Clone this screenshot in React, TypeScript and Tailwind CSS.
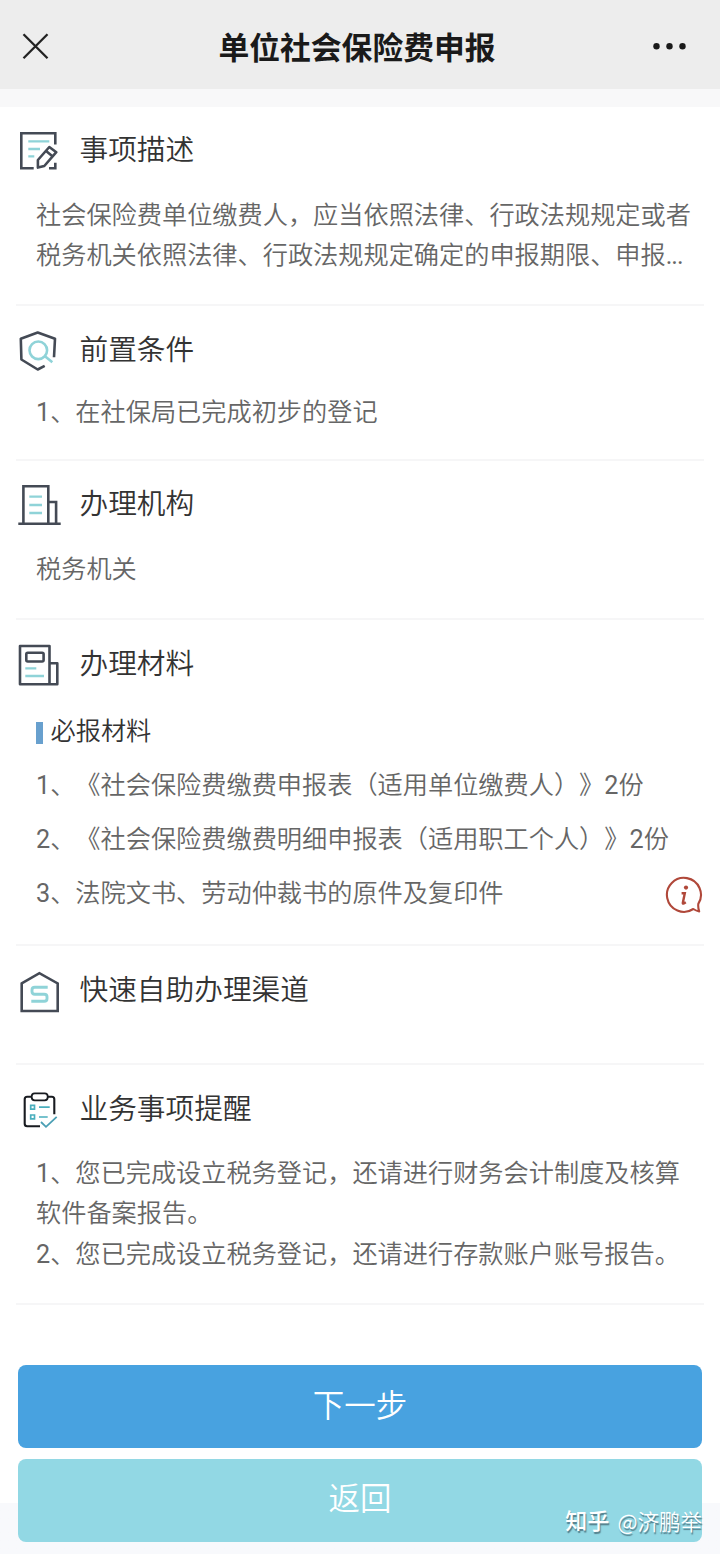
import type { ReactNode } from "react";

const INK = "#444a55";
const TEAL = "#8fd3d8";

function Icon({ children }: { children: ReactNode }) {
  return (
    <svg width="46" height="44" viewBox="0 0 46 44" fill="none" stroke={INK} strokeWidth="2.6" className="shrink-0">
      {children}
    </svg>
  );
}

const DescribeIcon = () => (
  <Icon>
    <path d="M39.3 15.5V4.2H5.3v35h12.4M33 39.2h6.3v-5.5" />
    <path d="M12.3 12.3h21M12.3 20H24M12.3 27.3h6" stroke={TEAL} strokeWidth="2.3" />
    <path d="M21.9 38.6V31L33.3 18l7 5.2L28.3 37Zm7.9-16.8 6.6 5.4" strokeLinejoin="round" />
  </Icon>
);

const ShieldIcon = () => (
  <Icon>
    <path d="M38 28.3 39 9.7 21.7 3.5 4.8 9.7l.6 20.8 16.3 10 7-3.6" strokeLinejoin="round" />
    <circle cx="22.3" cy="21.3" r="8.8" stroke={TEAL} />
    <path d="m29 27.2 7.3 6" stroke={TEAL} />
  </Icon>
);

const BuildingIcon = () => (
  <Icon>
    <path d="M2.3 40.7h42.4M7.4 40V3.2h24.9V40M32.3 19h7.8v21" />
    <path d="M13.3 13.7H26M13.3 22H26M13.3 30H26" stroke={TEAL} strokeWidth="2.3" />
  </Icon>
);

const MaterialIcon = () => (
  <Icon>
    <path d="M4 3h29.5v38.2H4ZM33.5 20.3h7.8v20.9h-7.8" strokeLinejoin="round" />
    <rect x="10.3" y="9.7" width="17.3" height="8.8" rx="1.5" />
    <path d="M9.3 25.3h11M9.3 33H28" stroke={TEAL} strokeWidth="2.3" />
  </Icon>
);

const ChannelIcon = () => (
  <Icon>
    <path d="M5.7 13.4 23.4 3.2l18.3 10.2V41h-36Z" />
    <path
      d="M31.7 17.3H18.8q-2.8 0-2.8 2.6v1.6q0 2.7 2.8 2.7h9.4q2.8 0 2.8 2.6v2q0 2.5-2.8 2.5H15.3"
      stroke={TEAL}
      strokeWidth="2.9"
    />
  </Icon>
);

const ReminderIcon = () => (
  <Icon>
    <path
      d="M15.5 8.7h-4.3q-2.5 0-2.5 2.5v24.6q0 2.5 2.5 2.5H24M32 8.7h3.8q2.5 0 2.5 2.5v15.1"
      stroke="#181b20"
      strokeWidth="2.1"
    />
    <rect x="15.7" y="5.3" width="16" height="7" rx="3" stroke="#181b20" strokeWidth="1.8" />
    <path d="M14.7 17.3h3.8v3.8h-3.8ZM14.7 27h3.8v3.8h-3.8ZM23 19.2h10.7M23 29h8.7" stroke="#4aaebd" strokeWidth="1.7" />
    <path d="m25 34 5 4.8 10.7-10" stroke="#4a9fb4" strokeWidth="1.8" />
  </Icon>
);

const InfoIcon = () => (
  <svg width="40" height="40" viewBox="0 0 40 40" fill="none" stroke="#b0483a" strokeWidth="2.1" className="mb-0.5 shrink-0">
    <path d="M34.3 30.9A17 17 0 1 0 29.3 36Q32 37.8 35.2 38.4q-1.3-3.4-.9-7.5Z" strokeLinejoin="round" />
    <circle cx="22" cy="14.6" r="2.1" fill="#b0483a" stroke="none" />
    <path d="M17.6 20.2h3.2l-2 9.8q-.2 1.4 3-.7" strokeWidth="2.4" />
  </svg>
);

const Num = ({ children }: { children: ReactNode }) => <span className="font-normal">{children}</span>;

type SectionProps = {
  icon: ReactNode;
  title: string;
  className: string;
  lift?: string;
  children?: ReactNode;
};

function Section({ icon, title, className, lift = "pb-[3px]", children }: SectionProps) {
  return (
    <section className={`mx-4 border-b-2 border-[#f6f6f7] ${className}`}>
      <div className="flex h-11 items-center">
        {icon}
        <h2 className={`ml-[17.5px] text-[28.7px] leading-10 font-[350] text-[#333] ${lift}`}>{title}</h2>
      </div>
      {children}
    </section>
  );
}

export default function App() {
  return (
    <div className="flex h-[1554px] w-[720px] flex-col overflow-hidden bg-white font-['Roboto','Noto_Sans_CJK_SC',sans-serif] text-[25.2px] leading-[40.3px] font-[350] text-[#666] [text-spacing-trim:space-all]">
      <header className="flex h-[89px] shrink-0 items-center justify-between bg-[#ededed] pb-px">
        <svg width="72" height="40" viewBox="0 0 72 40" fill="none" stroke="#222" strokeWidth="2.3">
          <path d="m23.5 10.3 24 24M47.5 10.3l-24 24" />
        </svg>
        <h1 className="pr-[6px] pt-[9px] text-[30.8px] font-bold leading-10 text-[#1a1a1a]">单位社会保险费申报</h1>
        <svg width="72" height="40" viewBox="0 0 72 40" fill="#1a1a1a">
          <circle cx="8.5" cy="22.3" r="3.2" />
          <circle cx="21.5" cy="22.3" r="3.2" />
          <circle cx="34.5" cy="22.3" r="3.2" />
        </svg>
      </header>
      <div className="h-[18px] shrink-0 bg-[#f8f8f9]" />

      <Section icon={<DescribeIcon />} title="事项描述" className="h-[199px] pt-[22px]">
        <p className="ml-5 mt-[23px] whitespace-nowrap">
          社会保险费单位缴费人，应当依照法律、行政法规规定或者
          <br />
          税务机关依照法律、行政法规规定确定的申报期限、申报
          <span className="font-normal tracking-[-1px]">...</span>
        </p>
      </Section>

      <Section icon={<ShieldIcon />} title="前置条件" className="h-[155px] pt-[23px]">
        <p className="ml-5 mt-5">
          <Num>1</Num>、在社保局已完成初步的登记
        </p>
      </Section>

      <Section icon={<BuildingIcon />} title="办理机构" className="h-[159px] pt-[22px]">
        <p className="ml-5 mt-[23px]">税务机关</p>
      </Section>

      <Section icon={<MaterialIcon />} title="办理材料" className="h-[326px] pt-[23px]">
        <div className="ml-5 mt-[25px] flex items-center text-[#333]">
          <span className="mr-[7.5px] mt-0.5 h-[22px] w-[7px] bg-[#68a0ce]" />
          必报材料
        </div>
        <ul className="ml-5 mt-[7px] whitespace-nowrap leading-[54px]">
          <li>
            <Num>1</Num>、《社会保险费缴费申报表（适用单位缴费人）》<Num>2</Num>份
          </li>
          <li>
            <Num>2</Num>、《社会保险费缴费明细申报表（适用职工个人）》<Num>2</Num>份
          </li>
          <li className="flex items-center justify-between">
            <span>
              <Num>3</Num>、法院文书、劳动仲裁书的原件及复印件
            </span>
            <InfoIcon />
          </li>
        </ul>
      </Section>

      <Section icon={<ChannelIcon />} title="快速自助办理渠道" className="h-[119px] pt-6" lift="pb-[5px]" />

      <Section icon={<ReminderIcon />} title="业务事项提醒" className="h-[240px] pt-[23px]">
        <p className="ml-5 mt-[22px] whitespace-nowrap">
          <Num>1</Num>、您已完成设立税务登记，还请进行财务会计制度及核算
          <br />
          软件备案报告。
          <br />
          <Num>2</Num>、您已完成设立税务登记，还请进行存款账户账号报告。
        </p>
      </Section>

      <footer className="relative flex grow flex-col gap-[11px] bg-linear-to-b from-white from-[198px] to-[#f8f9fc] to-[198px] px-[18px] pt-[60px] text-[31.5px] text-white">
        <button className="h-[83px] rounded-lg bg-[#48a2e0] pt-px">下一步</button>
        <button className="h-[83px] rounded-lg bg-[#92d8e4]">返回</button>
        <div className="absolute bottom-[11px] right-[18px] flex items-center gap-2 whitespace-nowrap leading-10 [text-shadow:1px_2px_1px_#547f8b]">
          <span className="text-[22px] font-medium">知乎</span>
          <span className="text-[21.5px]">
            <span className="font-['Noto_Sans_CJK_SC']">@</span>济鹏举
          </span>
        </div>
      </footer>
    </div>
  );
}
